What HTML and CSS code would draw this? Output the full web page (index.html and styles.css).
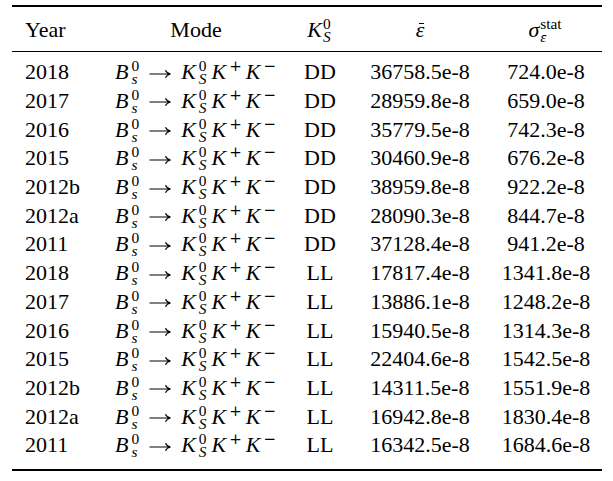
FILE: index.html
```html
<!DOCTYPE html>
<html lang="en">
<head>
    <meta charset="UTF-8">
    <title>Efficiencies</title>
    <link rel="stylesheet" href="styles.css">
</head>
<body>
    <table class="results">
        <thead>
            <tr>
                <th class="c-year">Year</th>
                <th class="c-mode">Mode</th>
                <th class="c-ks"><span class="mi">K</span><span class="ss"><span>0</span><span class="mi">S</span></span></th>
                <th class="c-eff"><span class="bar mi">ε</span></th>
                <th class="c-err"><span class="mi">σ</span><span class="ss"><span>stat</span><span class="bar mi">ε</span></span></th>
            </tr>
        </thead>
        <tbody id="rows"></tbody>
    </table>

    <script>
        const rows = [
            ['2018', 'DD', '36758.5e-8', '724.0e-8'],
            ['2017', 'DD', '28959.8e-8', '659.0e-8'],
            ['2016', 'DD', '35779.5e-8', '742.3e-8'],
            ['2015', 'DD', '30460.9e-8', '676.2e-8'],
            ['2012b', 'DD', '38959.8e-8', '922.2e-8'],
            ['2012a', 'DD', '28090.3e-8', '844.7e-8'],
            ['2011', 'DD', '37128.4e-8', '941.2e-8'],
            ['2018', 'LL', '17817.4e-8', '1341.8e-8'],
            ['2017', 'LL', '13886.1e-8', '1248.2e-8'],
            ['2016', 'LL', '15940.5e-8', '1314.3e-8'],
            ['2015', 'LL', '22404.6e-8', '1542.5e-8'],
            ['2012b', 'LL', '14311.5e-8', '1551.9e-8'],
            ['2012a', 'LL', '16942.8e-8', '1830.4e-8'],
            ['2011', 'LL', '16342.5e-8', '1684.6e-8']
        ];

        const arrow = '<svg class="rel" width="22" height="10" viewBox="0 0 22 10">' +
            '<path d="M0.5 5H21M16.5 1.2Q17.6 4 21.5 5Q17.6 6 16.5 8.8" fill="none" stroke="#000" stroke-width="1.1"/></svg>';

        // B_s^0 -> K_S^0 K^+ K^-
        const mode = [
            '<span class="mi b">B</span><span class="ss ss-b"><span>0</span><span class="mi">s</span></span>',
            arrow,
            '<span class="mi k">K</span><span class="ss"><span>0</span><span class="mi">S</span></span>',
            '<span class="mi k">K</span><span class="sup">+</span>',
            '<span class="mi k">K</span><span class="sup">−</span>'
        ].join('');

        document.getElementById('rows').innerHTML = rows.map(r =>
            '<tr>' +
                '<td class="c-year">' + r[0] + '</td>' +
                '<td class="c-mode">' + mode + '</td>' +
                '<td class="c-ks">' + r[1] + '</td>' +
                '<td class="c-eff">' + r[2] + '</td>' +
                '<td class="c-err">' + r[3] + '</td>' +
            '</tr>'
        ).join('');
    </script>
</body>
</html>
```

FILE: styles.css
```css
* {
    margin: 0;
    padding: 0;
    box-sizing: border-box;
}

body {
    background: #fff;
    color: #000;
    font-family: 'Liberation Serif', serif;
    font-size: 22px;
    line-height: 28.7px;
}

.results {
    margin: 5px 0 0 12px;
    width: 590px;
    table-layout: fixed;
    border-collapse: separate;
    border-spacing: 0;
    font-family: 'Liberation Serif', serif;
    font-size: 22px;
}

.results th,
.results td {
    font-weight: normal;
    white-space: nowrap;
    text-align: center;
}

.results th {
    border-top: 2px solid #000;
    border-bottom: 1px solid #000;
    padding-top: 9px;
    padding-bottom: 6.3px;
}

.results tbody tr:first-child td {
    padding-top: 6.2px;
}

.results tbody tr:last-child td {
    padding-bottom: 9px;
    border-bottom: 2px solid #000;
}

/* column widths and centres */
.results .c-year {
    width: 85px;
    text-align: left;
    padding-left: 13px;
}

.results .c-mode {
    width: 198px;
}

.results .c-ks {
    width: 50px;
}

.results .c-eff {
    width: 150px;
}

.results .c-err {
    width: 107px;
    padding-right: 5px;
}

/* math bits */
.mi {
    font-style: italic;
}

.k {
    margin-left: 3px;
    margin-right: 2px;
}

.rel {
    margin: 0 7px 0 8px;
    vertical-align: 0.5px;
}

.ss {
    display: inline-flex;
    flex-direction: column;
    align-items: flex-start;
    font-size: 0.7em;
    line-height: 13px;
    vertical-align: 8px;
    margin-left: 1px;
    margin-right: 2px;
}

.ss-b {
    margin-left: 3px;
}

.sup {
    font-family: 'DejaVu Serif', serif;
    font-size: 0.68em;
    line-height: 0;
    vertical-align: 8px;
    margin-left: 1px;
    margin-right: 1px;
}

.bar {
    position: relative;
    display: inline-block;
}

.bar::after {
    content: '';
    position: absolute;
    left: 0.15em;
    right: 0;
    top: 0.3em;
    border-top: 1px solid #000;
}
```
